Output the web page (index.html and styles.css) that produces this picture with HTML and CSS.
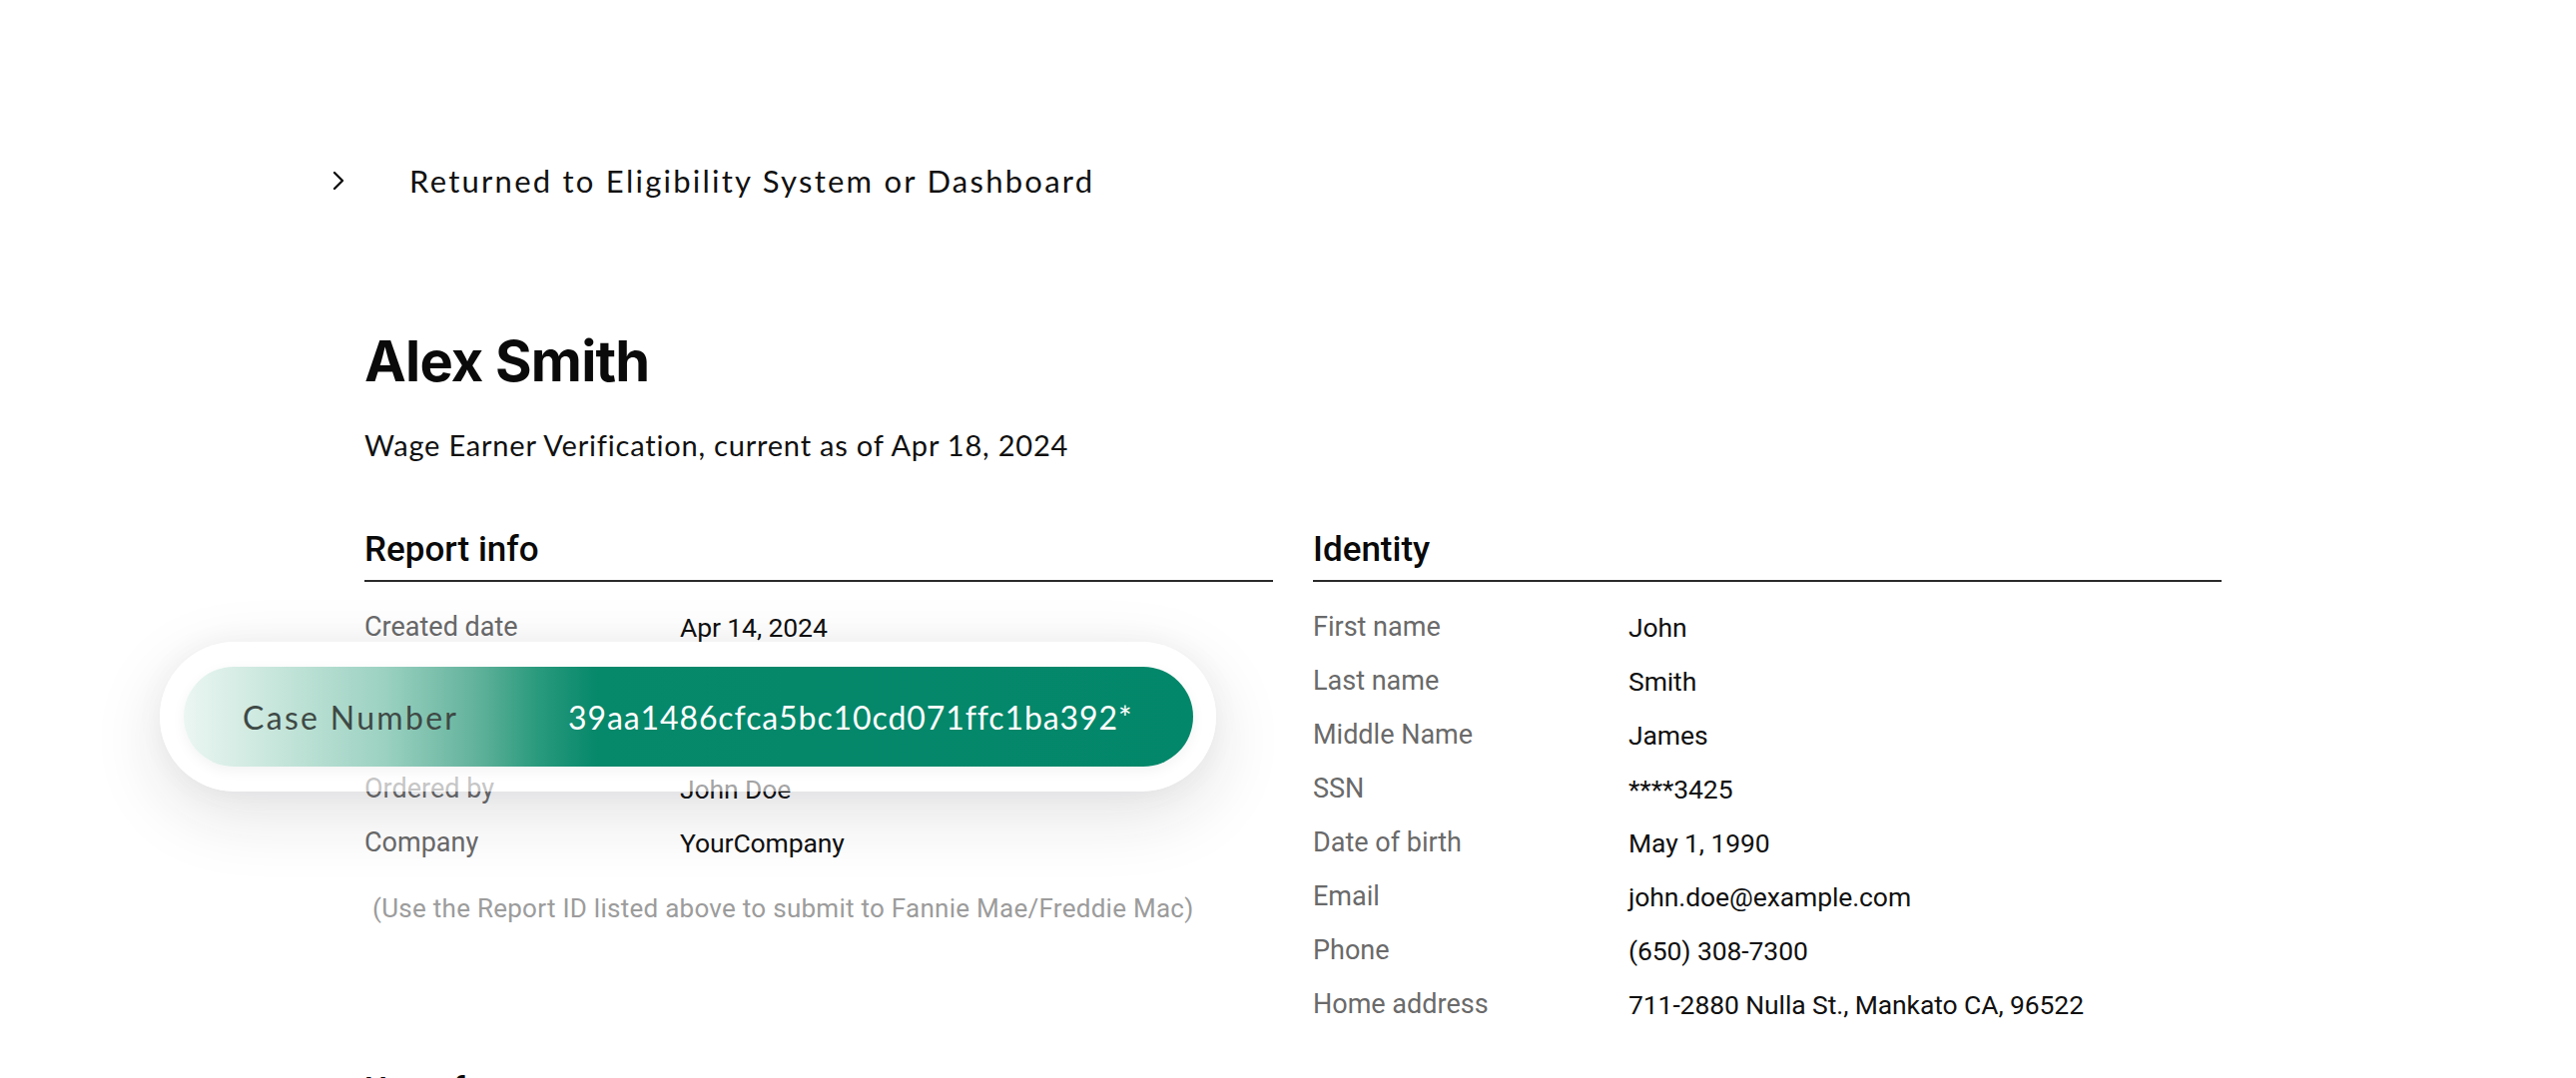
FILE: index.html
```html
<!DOCTYPE html>
<html lang="en">
<head>
<meta charset="utf-8">
<title>Alex Smith – Wage Earner Verification</title>
<link rel="stylesheet" href="styles.css">
</head>
<body>
<main class="page">
  <a class="back-link" href="#">
    <svg class="chevron" viewBox="0 0 14 22" width="14" height="22" aria-hidden="true">
      <polyline points="3,3 11,11 3,19" fill="none" stroke="#111" stroke-width="2.4" stroke-linecap="round" stroke-linejoin="round"/>
    </svg>
    <span class="back-text">Returned to Eligibility System or Dashboard</span>
  </a>

  <header class="report-head">
    <h1 class="name">Alex Smith</h1>
    <p class="subtitle">Wage Earner Verification, current as of Apr 18, 2024</p>
  </header>

  <div class="sections">
    <section class="panel">
      <h2 class="panel-title">Report info</h2>
      <dl class="fields">
        <div class="field"><dt>Created date</dt><dd>Apr 14, 2024</dd></div>
        <div class="field field-covered" aria-hidden="true"></div>
        <div class="field field-covered" aria-hidden="true"></div>
        <div class="field"><dt>Ordered by</dt><dd>John Doe</dd></div>
        <div class="field"><dt>Company</dt><dd>YourCompany</dd></div>
      </dl>
      <p class="note">(Use the Report ID listed above to submit to Fannie Mae/Freddie Mac)</p>

      <div class="case-callout">
        <div class="case-pill">
          <span class="case-label">Case Number</span>
          <span class="case-value">39aa1486cfca5bc10cd071ffc1ba392*</span>
        </div>
      </div>
    </section>

    <section class="panel">
      <h2 class="panel-title">Identity</h2>
      <dl class="fields">
        <div class="field"><dt>First name</dt><dd>John</dd></div>
        <div class="field"><dt>Last name</dt><dd>Smith</dd></div>
        <div class="field"><dt>Middle Name</dt><dd>James</dd></div>
        <div class="field"><dt>SSN</dt><dd>****3425</dd></div>
        <div class="field"><dt>Date of birth</dt><dd>May 1, 1990</dd></div>
        <div class="field"><dt>Email</dt><dd>john.doe@example.com</dd></div>
        <div class="field"><dt>Phone</dt><dd>(650) 308-7300</dd></div>
        <div class="field"><dt>Home address</dt><dd>711-2880 Nulla St., Mankato CA, 96522</dd></div>
      </dl>
    </section>
  </div>

  <h2 class="section-heading">Use of report</h2>
</main>
</body>
</html>
```

FILE: styles.css
```css
html, body {
  margin: 0;
  background: #ffffff;
}

body {
  color: #111111;
  font-family: Roboto, "Liberation Sans", Arial, sans-serif;
  overflow: hidden;
}

.page {
  padding: 161px 0 0 365px;
}

/* back link */
.back-link {
  display: flex;
  align-items: center;
  gap: 64px;
  height: 40px;
  margin-left: -33px;
  color: #111111;
  text-decoration: none;
}

.chevron {
  display: block;
  flex: none;
}

.back-text {
  font-family: Lato, "Open Sans", sans-serif;
  font-size: 31px;
  letter-spacing: 2.25px;
  line-height: 40px;
}

/* header */
.report-head {
  margin-top: 129px;
}

.name {
  margin: 0;
  font-family: Inter, Roboto, sans-serif;
  font-weight: 700;
  font-size: 56px;
  line-height: 64px;
  letter-spacing: -0.8px;
  color: #0a0a0a;
}

.subtitle {
  margin: 32px 0 0;
  font-family: Lato, "Open Sans", sans-serif;
  font-size: 29px;
  line-height: 40px;
  letter-spacing: 0.8px;
  color: #111111;
}

/* two columns */
.sections {
  display: grid;
  grid-template-columns: 910px 910px;
  column-gap: 40px;
  margin-top: 65px;
  align-items: start;
}

.panel {
  position: relative;
}

.panel-title {
  margin: 0;
  padding-bottom: 10px;
  border-bottom: 2px solid #2a2a2a;
  font-family: Roboto, sans-serif;
  font-weight: 500;
  font-size: 35px;
  line-height: 40px;
  color: #0a0a0a;
}

.fields {
  margin: 18px 0 0;
}

.field {
  display: grid;
  grid-template-columns: 316px 1fr;
  align-items: center;
  height: 54px;
  font-size: 27px;
}

.field dt {
  color: #6a6a6a;
}

.field dd {
  margin: 0;
  color: #111111;
  font-size: 26.5px;
  letter-spacing: -0.1px;
}

.note {
  margin: 19px 0 0 8px;
  font-size: 26px;
  line-height: 40px;
  letter-spacing: 0.27px;
  color: #9c9c9c;
}

/* case number callout overlay */
.case-callout {
  position: absolute;
  left: -205px;
  top: 112px;
  width: 1058px;
  height: 150px;
  box-sizing: border-box;
  padding: 25px 23px 25px 24px;
  border-radius: 75px;
  background: rgba(255, 255, 255, 0.62);
  box-shadow: 0 22px 70px rgba(30, 30, 50, 0.13), 0 0 30px rgba(30, 30, 50, 0.04);
}

.case-pill {
  display: grid;
  grid-template-columns: 326px auto;
  align-items: center;
  height: 100px;
  padding-left: 59px;
  border-radius: 50px;
  background: linear-gradient(90deg, #ebf6f2 0%, #c3e4d9 10%, #9bd1c1 20%, #62b29b 29%, #2a9a7d 35%, #06886a 41%, #03876a 100%);
  box-shadow: 0 4px 14px rgba(0, 0, 0, 0.05);
  font-family: Lato, "Open Sans", sans-serif;
  font-size: 32px;
}

.case-label {
  color: #3e4945;
  letter-spacing: 2.3px;
}

.case-value {
  color: #ffffff;
  letter-spacing: 0.9px;
}

.section-heading {
  margin: 40px 0 0;
  font-family: Roboto, sans-serif;
  font-weight: 500;
  font-size: 35px;
  line-height: 40px;
  color: #0a0a0a;
}
```
